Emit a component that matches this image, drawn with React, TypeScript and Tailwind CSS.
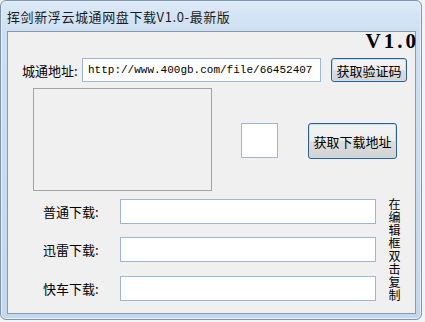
import React from "react";

const cjk = { fontFamily: '"Noto Sans CJK SC", "Noto Sans", sans-serif' };

function Btn({ label, w, h }: { label: string; w: string; h: string }) {
  return (
    <div
      className={`${w} ${h} flex items-center justify-center rounded-[3px] border border-[#2f5d8c] bg-[linear-gradient(#f4f4f4_0%,#ececec_50%,#dedede_50%,#d2d2d2_100%)] shadow-[inset_0_0_0_1px_#bfe3f7] text-[13px] text-black leading-none`}
      style={cjk}
    >
      {label}
    </div>
  );
}

export default function App() {
  return (
    <div className="w-[425px] h-[322px] bg-[#f4f4f4] overflow-hidden" style={cjk}>
      <div className="w-[422px] h-[320px] flex flex-col rounded-[6px] border border-[#7e93ad] bg-[linear-gradient(#dce9f7_0px,#cddff2_30px,#c4d8ee_100%)] shadow-[inset_0_0_0_1px_#e6f0fa]">
        <div className="h-[30px] flex items-center pl-[6px] text-[13px] tracking-[0.6px] text-[#1b1b1b] leading-none">
          挥剑新浮云城通网盘下载V1.0-最新版
        </div>
        <div className="flex-1 ml-[6px] mr-[5px] mb-[5px] border border-[#8898ad] bg-[#f0f0f0] flex flex-col">
          <div className="h-[26px] flex justify-end items-start">
            <span
              className="mr-[-4px] mt-[-3px] text-[21px] font-bold leading-[24px] tracking-[3px] text-black"
              style={{ fontFamily: '"Liberation Serif", serif' }}
            >
              V1.0
            </span>
          </div>
          <div className="flex items-center pl-[14px] h-[24px]">
            <div className="w-[60px] text-[13px] text-black leading-none">城通地址:</div>
            <div
              className="w-[239px] h-[24px] border border-[#9cb6d3] bg-white flex items-center pl-[5px] text-[11px] text-black"
              style={{ fontFamily: '"Liberation Mono", monospace' }}
            >
              http://www.400gb.com/file/66452407
            </div>
            <div className="ml-[10px]">
              <Btn label="获取验证码" w="w-[76px]" h="h-[24px]" />
            </div>
          </div>
          <div className="flex items-start pl-[25px] mt-[6px]">
            <div className="w-[179px] h-[103px] border border-[#a3a3a3] bg-[#f0f0f0]" />
            <div className="ml-[29px] mt-[35px] w-[37px] h-[35px] border border-[#9cb6d3] bg-white" />
            <div className="ml-[30px] mt-[35px]">
              <Btn label="获取下载地址" w="w-[89px]" h="h-[36px]" />
            </div>
          </div>
          <div className="flex mt-[8px]">
            <div className="flex flex-col pl-[35px]">
              <div className="flex items-center h-[25px]">
                <div className="w-[77px] text-[13px] text-black leading-none">普通下载:</div>
                <div className="w-[256px] h-[25px] border border-[#9cb6d3] bg-white" />
              </div>
              <div className="flex items-center h-[25px] mt-[13px]">
                <div className="w-[77px] text-[13px] text-black leading-none">迅雷下载:</div>
                <div className="w-[256px] h-[25px] border border-[#9cb6d3] bg-white" />
              </div>
              <div className="flex items-center h-[25px] mt-[14px]">
                <div className="w-[77px] text-[13px] text-black leading-none">快车下载:</div>
                <div className="w-[256px] h-[25px] border border-[#9cb6d3] bg-white" />
              </div>
            </div>
            <div className="ml-[12px] mt-[-1px] w-[13px] h-[106px] [writing-mode:vertical-rl] text-[12px] leading-[13px] tracking-[1px] text-black">
              在编辑框双击复制
            </div>
          </div>
        </div>
      </div>
    </div>
  );
}
